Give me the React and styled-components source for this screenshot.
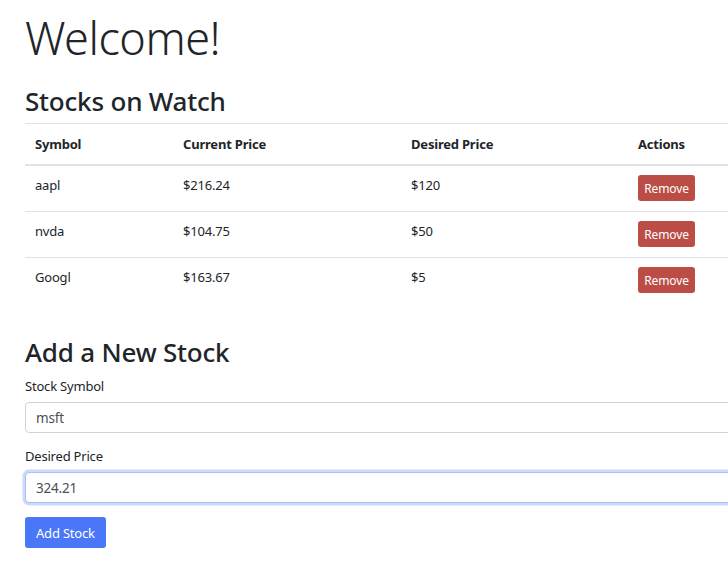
import React, { useEffect, useRef, useState } from 'react';
import styled, { createGlobalStyle } from 'styled-components';

const GlobalStyle = createGlobalStyle`
  html, body {
    margin: 0;
    padding: 0;
    background: #fff;
    overflow: hidden;
  }
  body {
    font-family: "Noto Sans", "Open Sans", sans-serif;
    color: #212529;
  }
`;

const Viewport = styled.div`
  width: 100vw;
  overflow: clip;
`;

const Page = styled.div`
  width: 820px;
  padding: 11px 0 0 25px;
`;

const Title = styled.h1`
  margin: 0 0 21px;
  font-size: 45px;
  font-weight: 300;
  line-height: 1.2;
  letter-spacing: -0.5px;
`;

const Heading = styled.h2`
  margin: 0;
  font-size: 26px;
  font-weight: 500;
  line-height: 1.2;
  letter-spacing: -0.2px;
`;

const Table = styled.table`
  width: 100%;
  table-layout: fixed;
  margin-top: 6px;
  border-collapse: collapse;
  font-size: 13px;
  letter-spacing: -0.2px;
`;

const Th = styled.th`
  box-sizing: border-box;
  width: ${p => p.$w || 'auto'};
  padding: 11px 10px 11px;
  text-align: left;
  font-weight: 700;
  border-top: 1px solid #dee2e6;
  border-bottom: 2px solid #dee2e6;
`;

const Td = styled.td`
  height: 46px;
  box-sizing: border-box;
  padding: 0 10px;
  border-bottom: 1px solid #dee2e6;
  vertical-align: middle;
  &:not(:last-child) {
    padding-bottom: 6px;
  }
`;

const Row = styled.tr`
  &:last-child td {
    border-bottom: none;
  }
`;

const RemoveButton = styled.button`
  width: 57px;
  height: 26px;
  padding: 0;
  border: none;
  border-radius: 3px;
  background: #bb4d46;
  color: #fff;
  font-family: inherit;
  font-size: 12px;
  letter-spacing: -0.1px;
  cursor: pointer;
`;

const Form = styled.form`
  margin-top: 34px;
`;

const Label = styled.label`
  display: block;
  margin: 9px 0 7px;
  font-size: 13px;
  letter-spacing: -0.2px;
`;

const Input = styled.input`
  display: block;
  box-sizing: border-box;
  width: 100%;
  height: 31px;
  padding: 0 10px;
  border: 1px solid ${p => (p.$focused ? '#a9bdf7' : '#ced4da')};
  border-radius: 4px;
  font-family: inherit;
  font-size: 13.5px;
  letter-spacing: -0.2px;
  color: #495057;
  outline: none;
  box-shadow: ${p => (p.$focused ? '0 0 0 2.5px rgba(74, 117, 247, 0.28)' : 'none')};
  margin-bottom: 14px;
`;

const SubmitButton = styled.button`
  height: 31px;
  padding: 0 11px;
  border: none;
  border-radius: 3px;
  background: #4a76f8;
  color: #fff;
  font-family: inherit;
  font-size: 13px;
  letter-spacing: -0.2px;
  cursor: pointer;
`;

const stocks = [
  { symbol: 'aapl', current: '$216.24', desired: '$120' },
  { symbol: 'nvda', current: '$104.75', desired: '$50' },
  { symbol: 'Googl', current: '$163.67', desired: '$5' },
];

export default function App() {
  const [symbol, setSymbol] = useState('msft');
  const [price, setPrice] = useState('324.21');
  const priceRef = useRef(null);

  useEffect(() => {
    const el = priceRef.current;
    if (el) {
      el.focus({ preventScroll: true });
      el.setSelectionRange(el.value.length, el.value.length);
    }
  }, []);

  return (
    <Viewport>
      <GlobalStyle />
      <Page>
        <Title>Welcome!</Title>
        <Heading>Stocks on Watch</Heading>
        <Table>
          <thead>
            <tr>
              <Th $w="148px">Symbol</Th>
              <Th $w="228px">Current Price</Th>
              <Th $w="227px">Desired Price</Th>
              <Th>Actions</Th>
            </tr>
          </thead>
          <tbody>
            {stocks.map(s => (
              <Row key={s.symbol}>
                <Td>{s.symbol}</Td>
                <Td>{s.current}</Td>
                <Td>{s.desired}</Td>
                <Td>
                  <RemoveButton type="button">Remove</RemoveButton>
                </Td>
              </Row>
            ))}
          </tbody>
        </Table>
        <Form onSubmit={e => e.preventDefault()}>
          <Heading>Add a New Stock</Heading>
          <Label htmlFor="symbol">Stock Symbol</Label>
          <Input id="symbol" value={symbol} onChange={e => setSymbol(e.target.value)} />
          <Label htmlFor="price">Desired Price</Label>
          <Input
            id="price"
            ref={priceRef}
            $focused
            value={price}
            onChange={e => setPrice(e.target.value)}
          />
          <SubmitButton type="submit">Add Stock</SubmitButton>
        </Form>
      </Page>
    </Viewport>
  );
}
